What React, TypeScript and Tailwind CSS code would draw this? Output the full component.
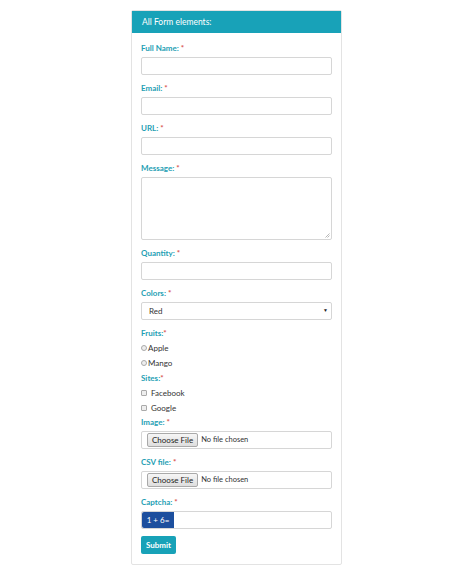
import React from 'react';

const Label: React.FC<{ text: string; star?: boolean }> = ({ text, star = true }) => (
  <div className="h-[10px] mb-[4px] flex items-center text-[8px] font-bold text-[#1fa0b4] leading-none">
    {text}
    {star && <span className="text-[#d9534f] ml-[2px]">*</span>}
  </div>
);

const TextBox: React.FC<{ h?: string }> = ({ h = 'h-[18px]' }) => (
  <div className={`${h} w-full border border-[#d6d6d6] rounded-[2px] bg-white mb-[8px] relative`}>
    {h !== 'h-[18px]' && (
      <svg width="5" height="5" viewBox="0 0 5 5" className="absolute right-[1px] bottom-[1px]">
        <path d="M4.5 0.5 L0.5 4.5 M4.5 2.5 L2.5 4.5" stroke="#9a9a9a" strokeWidth="0.7" />
      </svg>
    )}
  </div>
);

const FileBox: React.FC = () => (
  <div className="h-[18px] w-full border border-[#d6d6d6] rounded-[2px] bg-white mb-[8px] flex items-center pl-[5px] gap-[3px]">
    <span className="h-[14px] px-[4px] flex items-center text-[8px] text-[#222] border border-[#a9a9a9] rounded-[2px] bg-gradient-to-b from-[#f6f6f6] to-[#dedede]">
      Choose File
    </span>
    <span className="text-[7.5px] text-[#333]">No file chosen</span>
  </div>
);

const Option: React.FC<{ text: string; type: 'radio' | 'check' }> = ({ text, type }) => (
  <div className="h-[15px] flex items-center text-[8px] text-[#333]">
    {type === 'radio' ? (
      <span className="w-[6px] h-[6px] rounded-full border border-[#aaa] bg-[#eee] mr-[1px]" />
    ) : (
      <span className="w-[6px] h-[6px] rounded-[1px] border border-[#aaa] bg-[#eee] mr-[4px]" />
    )}
    {text}
  </div>
);

export default function App() {
  return (
    <div className="min-h-[578px] bg-white pt-[10px]" style={{ fontFamily: 'Lato, "Open Sans", sans-serif' }}>
      <div className="ml-[131px] w-[211px] border border-[#e3e3e3] rounded-[2px]">
        <div className="h-[22px] bg-[#18a2b8] flex items-center px-[10px] text-[8.5px] text-white">
          All Form elements:
        </div>
        <div className="px-[9px] pt-[10px] pb-[10px]">
          <Label text="Full Name:" />
          <TextBox />
          <Label text="Email:" />
          <TextBox />
          <Label text="URL:" />
          <TextBox />
          <Label text="Message:" />
          <TextBox h="h-[63px]" />
          <Label text="Quantity:" />
          <TextBox />
          <Label text="Colors:" />
          <div className="h-[18px] w-full border border-[#d6d6d6] rounded-[2px] bg-white flex items-center justify-between pl-[7px] pr-[3px] text-[8px] text-[#333]">
            <span>Red</span>
            <span className="text-[5px] text-[#222]">▼</span>
          </div>
          <div className="h-[5px]" />
          <div className="h-[15px] flex items-center text-[8px] font-bold text-[#1fa0b4]">
            Fruits:<span className="text-[#d9534f]">*</span>
          </div>
          <Option text="Apple" type="radio" />
          <Option text="Mango" type="radio" />
          <div className="h-[15px] flex items-center text-[8px] font-bold text-[#1fa0b4]">
            Sites:<span className="text-[#d9534f]">*</span>
          </div>
          <Option text="Facebook" type="check" />
          <Option text="Google" type="check" />
          <div className="h-[2px]" />
          <Label text="Image:" />
          <FileBox />
          <Label text="CSV file:" />
          <FileBox />
          <Label text="Captcha:" />
          <div className="h-[18px] w-full border border-[#d6d6d6] rounded-[2px] bg-white flex mb-[7px]">
            <span className="w-[32px] h-full bg-[#1d4f9e] text-white text-[8px] flex items-center justify-center rounded-l-[2px]">
              1 + 6=
            </span>
          </div>
          <button className="block h-[18px] px-[5px] bg-[#18a2b8] text-white text-[8px] font-bold rounded-[2px]">
            Submit
          </button>
        </div>
      </div>
    </div>
  );
}
